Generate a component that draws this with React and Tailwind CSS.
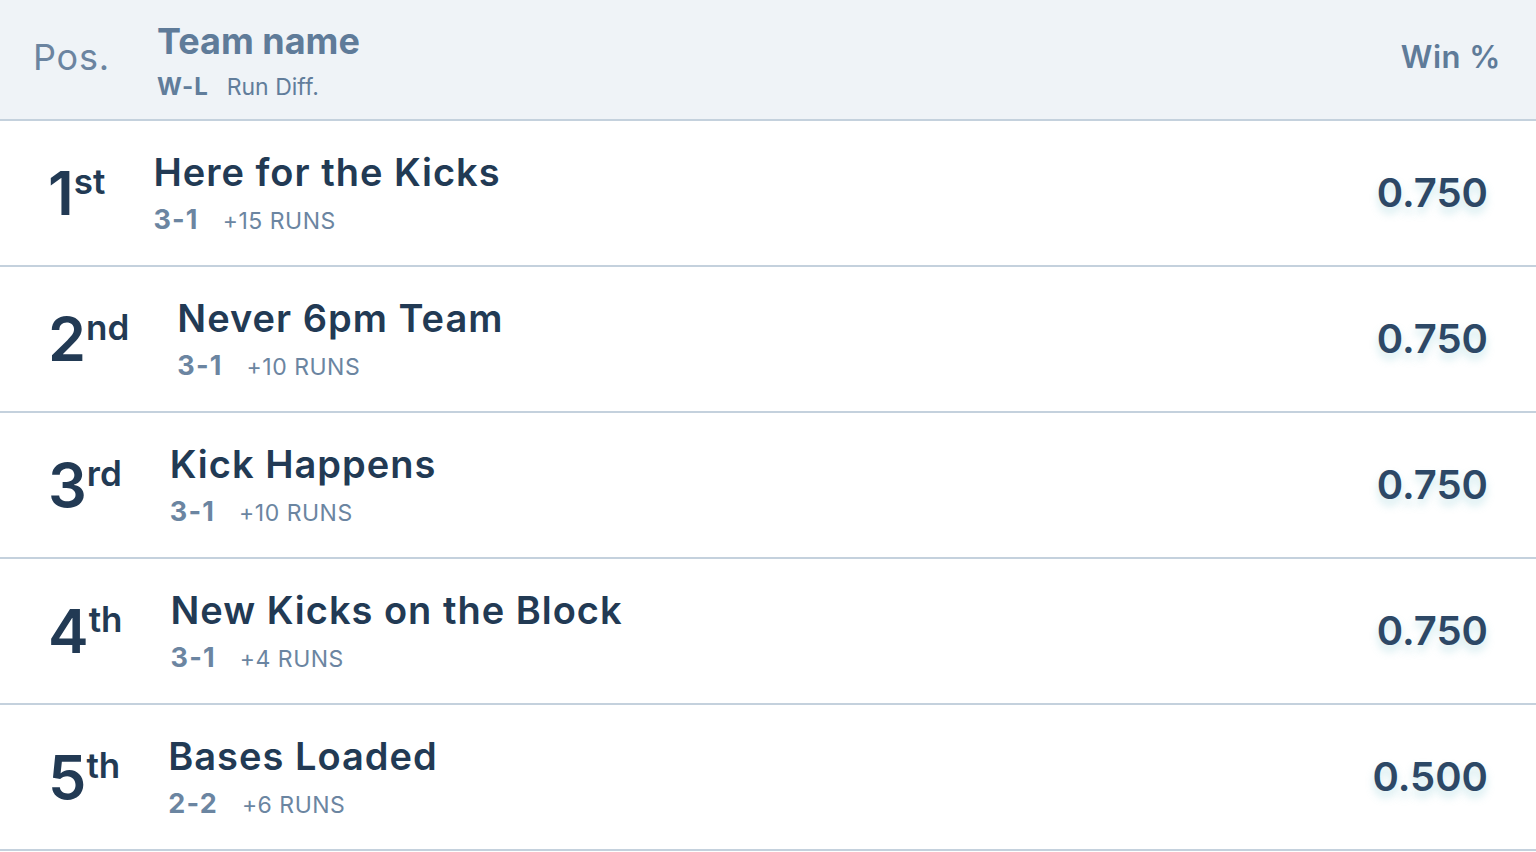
import React from "react";

const rows = [
  { n: "1", suf: "st", name: "Here for the Kicks", wl: "3-1", runs: "+15 RUNS", pct: "0.750" },
  { n: "2", suf: "nd", name: "Never 6pm Team", wl: "3-1", runs: "+10 RUNS", pct: "0.750" },
  { n: "3", suf: "rd", name: "Kick Happens", wl: "3-1", runs: "+10 RUNS", pct: "0.750" },
  { n: "4", suf: "th", name: "New Kicks on the Block", wl: "3-1", runs: "+4 RUNS", pct: "0.750" },
  { n: "5", suf: "th", name: "Bases Loaded", wl: "2-2", runs: "+6 RUNS", pct: "0.500" },
];

export default function App() {
  return (
    <div className="w-[1536px] h-[852px] bg-white overflow-hidden font-['Inter',sans-serif]">
      <div className="h-[121px] bg-[#eff3f7] border-b-2 border-[#c4d1dd] flex items-center pl-[33px] pr-[35px]">
        <div className="w-[124px] text-[36px] leading-none text-[#6b84a0] tracking-[0.8px] pb-[6px]">Pos.</div>
        <div className="flex flex-col flex-1">
          <div className="text-[36px] leading-[44px] font-bold text-[#5f7b99]">Team name</div>
          <div className="flex items-baseline gap-[18px] text-[#617d9b] mt-[10px]">
            <span className="font-bold tracking-[1px] text-[24px] leading-[28px]">W-L</span>
            <span className="font-normal text-[23px] leading-[28px]">Run Diff.</span>
          </div>
        </div>
        <div className="text-[31px] font-semibold text-[#5f7b99] pb-[4px] tracking-[0.5px]">Win %</div>
      </div>
      {rows.map((r) => (
        <div key={r.n} className="h-[146px] border-b-2 border-[#c4d1dd] flex items-center pl-[48px] pr-[48px]">
          <div className="flex items-start text-[#223a54] font-semibold">
            <span className="text-[61px] leading-none">{r.n}</span>
            <span className="text-[35px] leading-none mt-[1px]">{r.suf}</span>
          </div>
          <div className="flex flex-col ml-[48px] flex-1">
            <div className="text-[38px] leading-[46px] font-semibold text-[#223a54] tracking-[1px]">{r.name}</div>
            <div className="flex items-baseline gap-[24px] text-[#6b85a1] mt-[9px]">
              <span className="text-[27px] leading-[32px] font-bold tracking-[1.2px]">{r.wl}</span>
              <span className="text-[23px] leading-[32px] font-normal tracking-[0.5px]">{r.runs}</span>
            </div>
          </div>
          <div className="text-[40px] font-semibold text-[#2d4866] [text-shadow:0_6px_8px_rgba(110,190,200,0.35)]">{r.pct}</div>
        </div>
      ))}
    </div>
  );
}
